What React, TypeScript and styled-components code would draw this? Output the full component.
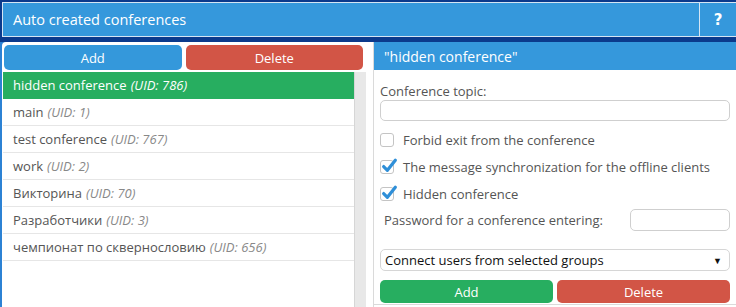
import React from "react"
import styled, { createGlobalStyle } from "styled-components"

const GlobalStyle = createGlobalStyle`
  html, body {
    margin: 0;
    padding: 0;
    background: #0b3a8c;
    font-family: "Open Sans", "Noto Sans", sans-serif;
  }
`;

const Page = styled.div`
  width: 736px;
  height: 307px;
  overflow: hidden;
  background: #0b3a8c;
  padding-top: 2px;
  box-sizing: border-box;
  display: flex;
  flex-direction: column;
`;

const Header = styled.div`
  margin-left: 2px;
  height: 35px;
  box-sizing: border-box;
  border: 1px solid #d5e5f4;
  border-right: none;
  background: #3598dc;
  display: flex;
  align-items: stretch;
`;

const HeaderTitle = styled.div`
  flex: 1;
  display: flex;
  align-items: center;
  padding-left: 10px;
  color: #fff;
  font-size: 14.5px;
`;

const HelpButton = styled.div`
  width: 36px;
  border-left: 1px solid #d5e5f4;
  display: flex;
  align-items: center;
  justify-content: center;
  color: #fff;
  font-weight: bold;
  font-size: 15px;
  font-family: "DejaVu Sans", sans-serif;
`;

const Main = styled.div`
  margin-top: 5px;
  flex: 1;
  background: #2c82d4;
  padding-left: 2px;
  display: flex;
  min-height: 0;
`;

const Body = styled.div`
  flex: 1;
  background: #fff;
  border-top-left-radius: 4px;
  display: flex;
  min-height: 0;
`;

const LeftPanel = styled.div`
  width: 364px;
  display: flex;
  flex-direction: column;
  padding-top: 3px;
  box-sizing: border-box;
`;

const ButtonRow = styled.div<{ $wide?: boolean }>`
  display: grid;
  grid-template-columns: 1fr 1fr;
  gap: 4px;
  padding: ${(p) => (p.$wide ? "0" : "0 3px 0 2px")};
`;

const Button = styled.button<{ $color: string; $h?: number }>`
  height: ${(p) => p.$h ?? 25}px;
  border: none;
  border-radius: 5px;
  background: ${(p) => p.$color};
  color: #fff;
  font-family: "Open Sans", "Noto Sans", sans-serif;
  font-size: 13px;
  padding: 0;
  cursor: pointer;
`;

const ListArea = styled.div`
  margin-top: 2px;
  margin-left: 1px;
  flex: 1;
  display: flex;
  min-height: 0;
`;

const List = styled.div`
  flex: 1;
  display: flex;
  flex-direction: column;
`;

const Row = styled.div<{ $active?: boolean }>`
  height: 27px;
  box-sizing: border-box;
  display: flex;
  align-items: center;
  padding-left: 10px;
  font-size: 13px;
  white-space: nowrap;
  border-bottom: 1px solid ${(p) => (p.$active ? "#27ae60" : "#e6e6e6")};
  background: ${(p) => (p.$active ? "#27ae60" : "#fff")};
  color: ${(p) => (p.$active ? "#fff" : "#555")};
`;

const Uid = styled.i<{ $active?: boolean }>`
  margin-left: 4px;
  color: ${(p) => (p.$active ? "#fff" : "#888")};
`;

const Scrollbar = styled.div`
  width: 11px;
  background: #e8e8e8;
  border-left: 1px solid #d6d6d6;
`;

const Spacer = styled.div`
  width: 7px;
`;

const RightPanel = styled.div`
  flex: 1;
  border-left: 1px solid #dadada;
  display: flex;
  flex-direction: column;
`;

const PanelTitle = styled.div`
  height: 28px;
  background: #3598dc;
  color: #fff;
  font-size: 14px;
  display: flex;
  align-items: center;
  padding-left: 10px;
`;

const Form = styled.div`
  padding: 0 6px;
  display: flex;
  flex-direction: column;
  flex: 1;
  border-bottom: 1px solid #dadada;
  margin-bottom: 2px;
`;

const Label = styled.div`
  margin-top: 12px;
  font-size: 13px;
  color: #555;
  line-height: 18px;
`;

const TextInput = styled.input<{ $w?: number }>`
  box-sizing: border-box;
  height: ${(p) => (p.$w ? 22 : 21)}px;
  width: ${(p) => (p.$w ? `${p.$w}px` : "100%")};
  border: 1px solid #cfcfcf;
  border-radius: 5px;
  background: #fff;
  outline: none;
`;

const CheckRow = styled.label`
  height: 27px;
  display: flex;
  align-items: center;
  gap: 9px;
  font-size: 13px;
  color: #555;
`;

const Box = styled.span`
  position: relative;
  width: 14px;
  height: 14px;
  box-sizing: border-box;
  border: 1px solid #c4c4c4;
  border-radius: 3px;
  background: #fff;
  flex-shrink: 0;
`;

const Tick = styled.svg`
  position: absolute;
  left: 0;
  top: -4px;
`;

const PasswordRow = styled.div`
  display: flex;
  align-items: center;
  justify-content: space-between;
  padding-left: 4px;
  height: 26px;
  font-size: 13px;
  color: #555;
`;

const Select = styled.div`
  margin-top: 16px;
  height: 22px;
  box-sizing: border-box;
  border: 1px solid #d6d6d6;
  border-radius: 5px;
  display: flex;
  align-items: center;
  justify-content: space-between;
  padding: 0 7px 0 4px;
  font-size: 13px;
  color: #111;
`;

const Arrow = styled.span`
  font-size: 9px;
  color: #111;
`;

const FormButtons = styled.div`
  margin-top: 9px;
`;

const conferences = [
  { name: "hidden conference", uid: 786 },
  { name: "main", uid: 1 },
  { name: "test conference", uid: 767 },
  { name: "work", uid: 2 },
  { name: "Викторина", uid: 70 },
  { name: "Разработчики", uid: 3 },
  { name: "чемпионат по сквернословию", uid: 656 },
]

const Checkbox = ({ checked, label }: { checked?: boolean; label: string }) => (
  <CheckRow>
    <Box>
      {checked && (
        <Tick width="17" height="17" viewBox="0 0 16 16">
          <path d="M2.5 9 L6 12.5 L13.5 3" fill="none" stroke="#2f8fd8" strokeWidth="3" strokeLinecap="round" strokeLinejoin="round" />
        </Tick>
      )}
    </Box>
    {label}
  </CheckRow>
)

const App = () => {
  return (
    <Page>
      <GlobalStyle />
      <Header>
        <HeaderTitle>Auto created conferences</HeaderTitle>
        <HelpButton>?</HelpButton>
      </Header>
      <Main>
        <Body>
          <LeftPanel>
            <ButtonRow>
              <Button $color="#3498db">Add</Button>
              <Button $color="#d25546">Delete</Button>
            </ButtonRow>
            <ListArea>
              <List>
                {conferences.map((c, i) => (
                  <Row key={c.uid} $active={i === 0}>
                    {c.name}
                    <Uid $active={i === 0}>(UID: {c.uid})</Uid>
                  </Row>
                ))}
              </List>
              <Scrollbar />
            </ListArea>
          </LeftPanel>
          <Spacer />
          <RightPanel>
            <PanelTitle>"hidden conference"</PanelTitle>
            <Form>
              <Label>Conference topic:</Label>
              <TextInput type="text" />
              <div style={{ height: 5 }} />
              <Checkbox label="Forbid exit from the conference" />
              <Checkbox checked label="The message synchronization for the offline clients" />
              <Checkbox checked label="Hidden conference" />
              <PasswordRow>
                Password for a conference entering:
                <TextInput type="text" $w={100} />
              </PasswordRow>
              <Select>
                Connect users from selected groups
                <Arrow>▼</Arrow>
              </Select>
              <FormButtons>
                <ButtonRow $wide>
                  <Button $color="#27ae60" $h={23}>Add</Button>
                  <Button $color="#d25546" $h={23}>Delete</Button>
                </ButtonRow>
              </FormButtons>
            </Form>
          </RightPanel>
        </Body>
      </Main>
    </Page>
  )
}

export default App
